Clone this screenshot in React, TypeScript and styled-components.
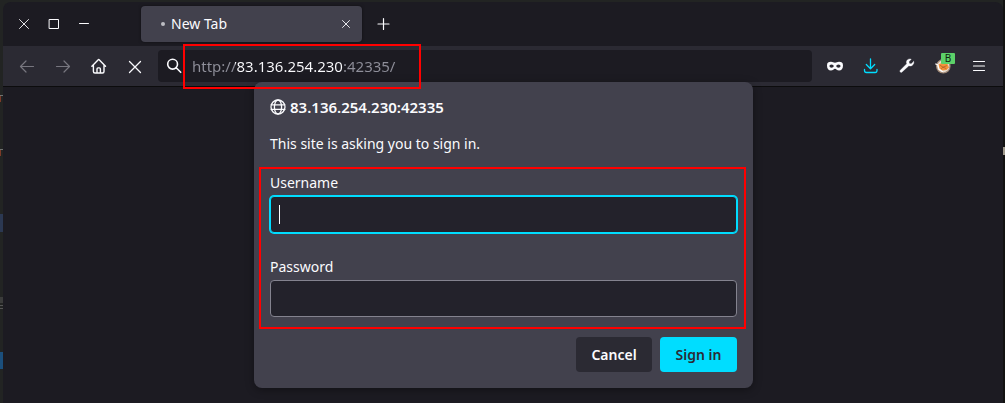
import React, { useId } from "react";
import styled, { createGlobalStyle, css } from "styled-components";

const GlobalStyle = createGlobalStyle`
  * { box-sizing: border-box; }
  body {
    margin: 0;
    background: #222423;
    color: #fbfbfe;
    font-family: "Noto Sans", "Liberation Sans", sans-serif;
    font-size: 14px;
    line-height: 20px;
  }
  button, input { font: inherit; color: inherit; }
`;

/* The desktop shows as a thin rim around the browser window. */
const Desktop = styled.div`
  display: flex;
  min-height: 100vh;
  padding: 2px 2px 0 3px;
  background:
    linear-gradient(#a09a8c, #a09a8c) right 147px / 2px 8px no-repeat,
    linear-gradient(#7c3a28, #7c3a28) 0 96px / 1px 6px no-repeat,
    linear-gradient(#7c3a28, #7c3a28) 0 150px / 1px 6px no-repeat,
    linear-gradient(#707270, #707270) 0 95px / 3px 1px no-repeat,
    linear-gradient(#707270, #707270) 0 149px / 3px 1px no-repeat,
    linear-gradient(#2b3852, #2b3852) 0 214px / 3px 18px no-repeat,
    linear-gradient(#3b3c3b, #3b3c3b) 0 297px / 3px 6px no-repeat,
    linear-gradient(#555, #555) 0 305px / 3px 1px no-repeat,
    linear-gradient(#555, #555) 0 308px / 3px 1px no-repeat,
    linear-gradient(#1b4f7c, #1b4f7c) 0 352px / 3px 17px no-repeat,
    linear-gradient(#121211, #121211) right 0 / 2px 100% no-repeat,
    #222423;
`;

const BrowserWindow = styled.div`
  flex: 1;
  min-width: 0;
  background: #1c1b22;
  border-radius: 8px 8px 0 0;
`;

const TitleBar = styled.header`
  display: flex;
  align-items: center;
  height: 44px;
  padding: 0 6px;
`;

const WindowControls = styled.div`
  display: flex;
  margin-right: 42px;
`;

const IconButton = styled.button<{ $width?: number; $tone?: string }>`
  position: relative;
  display: flex;
  flex: none;
  align-items: center;
  justify-content: center;
  width: ${(p) => p.$width ?? 36}px;
  height: 32px;
  padding: 0;
  border: 0;
  background: none;
  color: ${(p) => p.$tone ?? "#fbfbfe"};
`;

const Tab = styled.div`
  display: flex;
  align-items: center;
  width: 221px;
  height: 36px;
  margin-right: 4px;
  padding: 0 4px 0 20px;
  border-radius: 4px;
  background: #42414d;
  box-shadow: 0 0 3px rgba(0, 0, 0, 0.5);
`;

const LoadingDot = styled.span`
  width: 4px;
  height: 4px;
  margin-right: 6px;
  border-radius: 50%;
  background: #bdbdc3;
`;

const TabTitle = styled.span`
  flex: 1;
`;

const Toolbar = styled.nav`
  display: flex;
  align-items: center;
  height: 41px;
  padding: 0 6px;
  border-bottom: 1px solid #0c0c0d;
  background: #2b2a33;
`;

const UrlBar = styled.div`
  display: flex;
  flex: 1;
  align-items: center;
  height: 32px;
  margin: 0 5px;
  padding-left: 8px;
  border-radius: 4px;
  background: #1c1b22;
`;

const UrlField = styled.div`
  position: relative;
  flex: 1;
  margin-left: 10px;
`;

/* Host in white, scheme and port dimmed. */
const UrlInput = styled.input`
  display: block;
  width: 100%;
  height: 24px;
  padding: 0;
  border: 0;
  outline: 0;
  font-size: 15px;
  background: linear-gradient(90deg, #8f8f9a 43px, #fbfbfe 43px 152px, #8f8f9a 152px);
  background-clip: text;
  -webkit-background-clip: text;
  -webkit-text-fill-color: transparent;
`;

const Marker = styled.div`
  position: absolute;
  z-index: 3;
  border: 2px solid #ff0000;
  pointer-events: none;
`;

const UrlMarker = styled(Marker)`
  top: -10px;
  left: -9px;
  width: 238px;
  height: 45px;
`;

const FieldsMarker = styled(Marker)`
  inset: -6px -9px -12px -11px;
`;

const ExtensionBadge = styled.span`
  position: absolute;
  top: 3px;
  right: 6px;
  width: 14px;
  height: 11px;
  border-radius: 1px;
  background: #5cd169;
  color: #10240f;
  font-size: 10px;
  line-height: 11px;
  text-align: center;
`;

const Page = styled.main`
  display: flex;
  justify-content: center;
  padding: 0 0 15px 1px;
`;

const Dialog = styled.form`
  position: relative;
  z-index: 1;
  width: 499px;
  margin-top: -5px;
  padding: 16px;
  border-radius: 8px;
  background: #42414d;
  box-shadow: 0 2px 8px rgba(0, 0, 0, 0.35);
`;

const DialogTitle = styled.h1`
  display: flex;
  align-items: center;
  gap: 4px;
  margin: 0 0 18px;
  font-size: 15px;
  font-weight: 600;
  line-height: 18px;
`;

const Message = styled.p`
  margin: 0 0 19px;
`;

const Fields = styled.div`
  position: relative;
  display: grid;
  gap: 24px;
`;

const Field = styled.div`
  display: grid;
  gap: 3px;
`;

const InputBox = styled.div<{ $active?: boolean }>`
  position: relative;
  ${(p) =>
    p.$active &&
    css`
      &::after {
        content: "";
        position: absolute;
        top: 9px;
        left: 9px;
        width: 1px;
        height: 19px;
        background: #fbfbfe;
      }
    `}
`;

const TextInput = styled.input<{ $active?: boolean }>`
  display: block;
  width: 100%;
  height: 37px;
  padding: 0 9px;
  border: 1px solid ${(p) => (p.$active ? "#00ddff" : "#84838f")};
  border-radius: 4px;
  outline: 0;
  background: #23222b;
  box-shadow: ${(p) => (p.$active ? "0 0 0 1px #00ddff" : "none")};
`;

const Actions = styled.div`
  display: flex;
  justify-content: flex-end;
  gap: 8px;
  margin-top: 20px;
`;

const ActionButton = styled.button<{ $primary?: boolean }>`
  width: ${(p) => (p.$primary ? 77 : 76)}px;
  height: 35px;
  padding: 0;
  border: 0;
  border-radius: 4px;
  background: ${(p) => (p.$primary ? "#00ddff" : "#2b2a33")};
  color: ${(p) => (p.$primary ? "#2b2a33" : "#fbfbfe")};
  font-weight: 600;
`;

type IconProps = { size?: number; stroke?: number; children: React.ReactNode };

const Icon = ({ size = 16, stroke = 1.3, children }: IconProps) => (
  <svg
    width={size}
    height={size}
    viewBox={`0 0 ${size} ${size}`}
    fill="none"
    stroke="currentColor"
    strokeWidth={stroke}
    strokeLinecap="round"
    strokeLinejoin="round"
    aria-hidden="true"
  >
    {children}
  </svg>
);

function LoginField({ label, type, active }: { label: string; type: string; active?: boolean }) {
  const id = useId();
  return (
    <Field>
      <label htmlFor={id}>{label}</label>
      <InputBox $active={active}>
        <TextInput id={id} type={type} $active={active} />
      </InputBox>
    </Field>
  );
}

export default function App() {
  return (
    <Desktop>
      <GlobalStyle />
      <BrowserWindow>
        <TitleBar>
          <WindowControls>
            <IconButton $width={30} aria-label="Close window">
              <Icon size={12} stroke={0.9}><path d="M1.5 1.5l9 9M10.5 1.5l-9 9" /></Icon>
            </IconButton>
            <IconButton $width={30} aria-label="Maximize window">
              <Icon size={12} stroke={1}><path d="M1.5 1.5h9v9h-9z" /></Icon>
            </IconButton>
            <IconButton $width={30} aria-label="Minimize window">
              <Icon size={12} stroke={1}><path d="M1.5 5.5h9" /></Icon>
            </IconButton>
          </WindowControls>
          <Tab>
            <LoadingDot />
            <TabTitle>New Tab</TabTitle>
            <IconButton $width={24} aria-label="Close tab">
              <Icon size={10} stroke={0.9}><path d="M1.5 1.5l7 7M8.5 1.5l-7 7" /></Icon>
            </IconButton>
          </Tab>
          <IconButton aria-label="New tab">
            <Icon size={14} stroke={1.2}><path d="M6.500 1.500v11M1 7h11" /></Icon>
          </IconButton>
        </TitleBar>

        <Toolbar>
          <IconButton $tone="#77767f" aria-label="Back">
            <Icon stroke={1.2}><path d="M14.5 8.5H1.5M7 3L1.5 8.5 7 14" /></Icon>
          </IconButton>
          <IconButton $tone="#77767f" aria-label="Forward">
            <Icon stroke={1.2}><path d="M1.5 8.5h13M9 3l5.500 5.500L9 14" /></Icon>
          </IconButton>
          <IconButton aria-label="Home">
            <Icon stroke={1.4}>
              <path d="M.9 8.200L7 1.900a1 1 0 0 1 1.400 0L14.500 8.200M2.400 7v6.500a1.500 1.500 0 0 0 1.500 1.500h7.600a1.500 1.500 0 0 0 1.500-1.500V7M6 14.800v-3.900a1 1 0 0 1 1-1h1.400a1 1 0 0 1 1 1v3.900" />
            </Icon>
          </IconButton>
          <IconButton aria-label="Stop">
            <Icon stroke={1.3}><path d="M2.500 3.500l11 11M13.500 3.500l-11 11" /></Icon>
          </IconButton>
          <UrlBar>
            <Icon stroke={1.6}><path d="M11.500 6.200a4.900 4.900 0 1 1-9.800 0 4.900 4.900 0 0 1 9.800 0zM10.200 9.800l4.500 4.500" /></Icon>
            <UrlField>
              <UrlInput aria-label="Address" defaultValue="http://83.136.254.230:42335/" />
              <UrlMarker />
            </UrlField>
          </UrlBar>
          <IconButton aria-label="Private mask">
            <Icon>
              <path
                d="M4 3.800c1.700 0 2.500 1 4 1s2.300-1 4-1c2.500 0 4 .8 4 3.600 0 3.300-1.600 5.200-3.900 5.200-2.100 0-2.900-1.800-4.100-1.800s-2 1.800-4.100 1.800C1.600 12.600 0 10.700 0 7.400c0-2.800 1.500-3.600 4-3.600zM4.500 6.400c-1.300 0-2 .8-2 1.700s.9 1.600 2 1.600 2.200-.7 2.200-1.600-.9-1.700-2.200-1.700zM11.500 6.400c-1.300 0-2.200.8-2.200 1.700s1.100 1.600 2.200 1.600 2-.7 2-1.600-.7-1.700-2-1.700z"
                fill="currentColor"
                fillRule="evenodd"
                stroke="none"
              />
            </Icon>
          </IconButton>
          <IconButton $tone="#00ddff" aria-label="Downloads">
            <Icon stroke={1.3}><path d="M7.500 .8v9.700M3.300 6.500L7.500 10.700l4.200-4.200M1.500 11.500v1.100a1.900 1.900 0 0 0 1.900 1.900h8.700a1.900 1.900 0 0 0 1.900-1.900v-1.100" /></Icon>
          </IconButton>
          <IconButton aria-label="Developer tools">
            <Icon>
              <path
                d="M14.700 3.600l-2.600 2.300-1.800-.4-.4-1.800 2.300-2.500c-1.900-.7-3.700.2-4.400 1.600-.5 1-.4 2 0 2.900L1.300 12.300c-.5.5-.5 1.200 0 1.700s1.200.6 1.700 0l6.900-6.300c1 .4 2.100.4 3.200-.3 1.400-.8 2-2.300 1.600-3.800z"
                fill="currentColor"
                stroke="currentColor"
                strokeWidth=".4"
              />
            </Icon>
          </IconButton>
          <IconButton aria-label="Proxy switcher">
            <Icon>
              <circle cx="8.300" cy="8.300" r="6.700" fill="#e6dbd0" stroke="#a08876" strokeWidth="1.200" />
              <path d="M3.500 6.500l3-1.500 6 1 1.500 3.500-2.500 2.500-4.500.5-2.500-2z" fill="#f5923a" stroke="none" />
              <path d="M.6 6l2.200.8 1.200 4.400 3.500 2.300" stroke="#fff" strokeWidth="1.100" />
              <path d="M5.500 7.500l2.500 1.700 3.500-1.400M6.500 10.500l1.500-1.300 3 1.300" stroke="#a65a22" strokeWidth=".7" />
            </Icon>
            <ExtensionBadge>B</ExtensionBadge>
          </IconButton>
          <IconButton aria-label="Open menu">
            <Icon stroke={1.2}><path d="M2.500 3.500h11M2.500 8h11M2.500 12.500h11" /></Icon>
          </IconButton>
        </Toolbar>

        <Page>
          <Dialog onSubmit={(e) => e.preventDefault()}>
            <DialogTitle>
              <Icon stroke={1.3}>
                <circle cx="8" cy="8" r="7" />
                <ellipse cx="8" cy="8" rx="3.600" ry="7" />
                <path d="M1.200 5.800h13.600M1.200 10.400h13.600" />
              </Icon>
              83.136.254.230:42335
            </DialogTitle>
            <Message>This site is asking you to sign in.</Message>
            <Fields>
              <LoginField label="Username" type="text" active />
              <LoginField label="Password" type="password" />
              <FieldsMarker />
            </Fields>
            <Actions>
              <ActionButton type="button">Cancel</ActionButton>
              <ActionButton type="submit" $primary>Sign in</ActionButton>
            </Actions>
          </Dialog>
        </Page>
      </BrowserWindow>
    </Desktop>
  );
}
